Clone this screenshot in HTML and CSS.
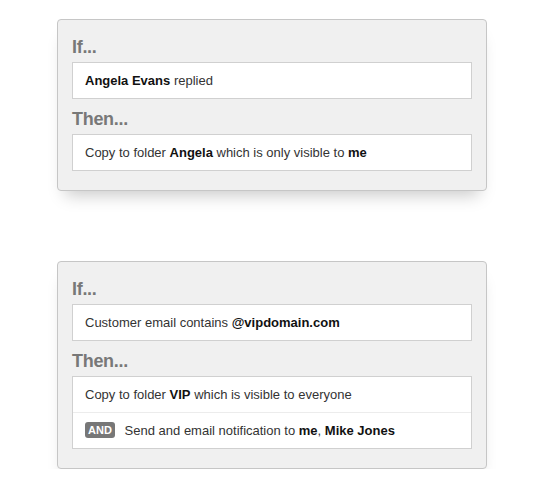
FILE: index.html
```html
<!DOCTYPE html>
<html lang="en">
<head>
  <meta charset="UTF-8">
  <title>Rules</title>
  <link rel="stylesheet" href="styles.css">
</head>
<body>
  <div class="page">
    <div class="rule">
      <h3>If...</h3>
      <div class="box">
        <div class="row"><b>Angela Evans</b> replied</div>
      </div>
      <h3>Then...</h3>
      <div class="box">
        <div class="row">Copy to folder <b>Angela</b> which is only visible to <b>me</b></div>
      </div>
    </div>

    <div class="rule">
      <h3>If...</h3>
      <div class="box">
        <div class="row">Customer email contains <b>@vipdomain.com</b></div>
      </div>
      <h3>Then...</h3>
      <div class="box">
        <div class="row">Copy to folder <b>VIP</b> which is visible to everyone</div>
        <div class="row"><span class="tag">AND</span> Send and email notification to <b>me</b>, <b>Mike Jones</b></div>
      </div>
    </div>
  </div>
</body>
</html>
```

FILE: styles.css
```css
body {
  margin: 0;
  font-family: "Liberation Sans", Arial, sans-serif;
  background: #fff;
  color: #333;
}
.page {
  display: flex;
  flex-direction: column;
  align-items: flex-start;
  gap: 70px;
  padding: 19px 0 0 57px;
}
.rule {
  width: 400px;
  padding: 17px 14px 19px 14px;
  background: #f0f0f0;
  border: 1px solid #c6c6c6;
  border-radius: 4px;
  box-shadow: 0 12px 16px -8px rgba(0,0,0,0.22);
}
.rule h3 {
  margin: 0 0 5px;
  font-size: 18px;
  line-height: 20px;
  color: #787878;
  letter-spacing: -0.3px;
}
.rule h3 + .box + h3 {
  margin-top: 10px;
}
.box {
  background: #fff;
  border: 1px solid #d0d0d0;
}
.row {
  font-size: 13px;
  line-height: 35px;
  padding: 0 12px;
}
.row + .row {
  border-top: 1px solid #ececec;
}
.row b {
  color: #111;
}
.tag {
  display: inline-block;
  width: 30px;
  text-align: center;
  background: #777;
  color: #fff;
  font-size: 11px;
  font-weight: bold;
  line-height: 16px;
  border-radius: 3px;
  margin-right: 6px;
  vertical-align: 1px;
}
```
